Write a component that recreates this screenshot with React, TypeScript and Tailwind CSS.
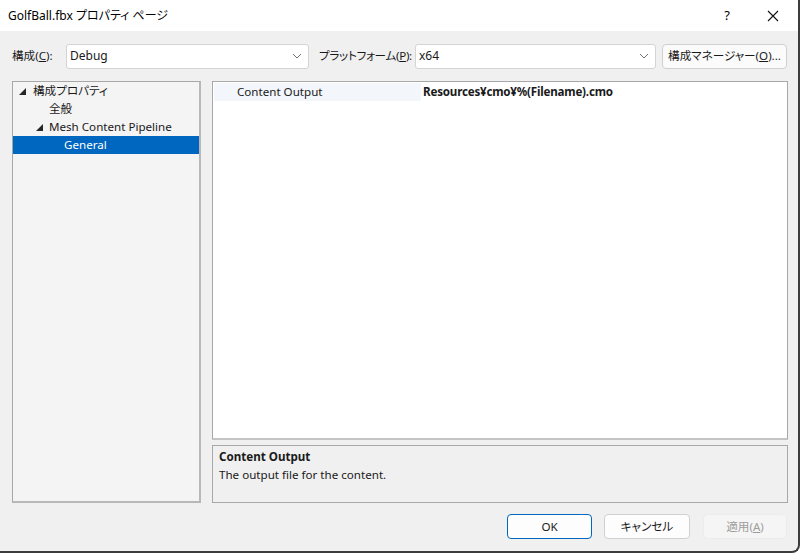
import React from "react";

const font = { fontFamily: '"Noto Sans", "Noto Sans CJK JP", sans-serif' };

function Chevron() {
  return (
    <svg width="10" height="6" viewBox="0 0 10 6" className="shrink-0">
      <path d="M1 1 L5 5 L9 1" fill="none" stroke="#707070" strokeWidth="1" />
    </svg>
  );
}

function Tri() {
  return (
    <svg width="7" height="7" viewBox="0 0 7 7" className="shrink-0">
      <path d="M7 0 L7 7 L0 7 Z" fill="#262626" />
    </svg>
  );
}

export default function App() {
  return (
    <div
      className="w-[800px] h-[553px] bg-[#f0f0f0] border-r-2 border-b-2 border-[#3c3c3c] rounded-br-[8px] overflow-hidden flex flex-col text-[11.6px] text-[#1a1a1a] [font-feature-settings:'palt']"
      style={font}
    >
      {/* Title bar */}
      <div className="h-[31px] bg-white flex items-center shrink-0">
        <div className="pl-[8px] flex-1 text-[12px] text-black whitespace-nowrap">GolfBall.fbx プロパティ ページ</div>
        <div className="w-[46px] flex justify-center text-[13px] text-black">?</div>
        <div className="w-[46px] flex justify-center mr-[2px]">
          <svg width="12" height="12" viewBox="0 0 12 12">
            <path d="M1 1 L11 11 M11 1 L1 11" stroke="#111" strokeWidth="1.1" />
          </svg>
        </div>
      </div>

      {/* Body */}
      <div className="flex-1 flex flex-col pl-[12px] pr-[10px] pt-[12px]">
        {/* Config row */}
        <div className="flex items-center h-[26px]">
          <div className="w-[54px] shrink-0 whitespace-nowrap">
            構成(<span className="underline">C</span>):
          </div>
          <div className="w-[243px] shrink-0 h-[25px] bg-white border border-[#d4d4d4] rounded-[3px] flex items-center pl-[3px] pr-[6px]">
            <span className="flex-1 text-[12px]">Debug</span>
            <Chevron />
          </div>
          <div className="ml-[10px] w-[96px] shrink-0 whitespace-nowrap tracking-[-0.3px]">
            プラットフォーム(<span className="underline">P</span>):
          </div>
          <div className="w-[241px] shrink-0 h-[25px] bg-white border border-[#d4d4d4] rounded-[3px] flex items-center pl-[3px] pr-[6px]">
            <span className="flex-1 text-[12px]">x64</span>
            <Chevron />
          </div>
          <div className="ml-[6px] w-[125px] shrink-0 h-[25px] bg-[#fbfbfb] border border-[#d0d0d0] rounded-[4px] flex items-center justify-center whitespace-nowrap">
            構成マネージャー(<span className="underline">O</span>)...
          </div>
        </div>

        {/* Main */}
        <div className="flex mt-[12px] h-[422px]">
          {/* Tree */}
          <div className="w-[189px] h-full bg-[#f4f4f4] border border-[#a8a8a8] border-r-2 border-b-2 border-r-[#b8b8b8] border-b-[#b8b8b8]">
            <div className="h-[18px] flex items-center pl-[6px]">
              <Tri />
              <span className="ml-[7px]">構成プロパティ</span>
            </div>
            <div className="h-[18px] flex items-center pl-[36px]">全般</div>
            <div className="h-[18px] flex items-center pl-[23px]">
              <Tri />
              <span className="ml-[6px]">Mesh Content Pipeline</span>
            </div>
            <div className="h-[18px] flex items-center pl-[51px] bg-[#0067c0] text-white">General</div>
          </div>

          {/* Right side */}
          <div className="ml-[11px] w-[576px] flex flex-col">
            <div className="h-[360px] bg-white border border-[#a8a8a8] border-b-2 border-b-[#c4c4c4] p-[1px]">
              <div className="h-[18px] flex items-center">
                <div className="w-[207px] h-full bg-[#f3f6fa] flex items-center pl-[23px]">Content Output</div>
                <div className="pl-[2px] font-bold tracking-[-0.2px]">Resources¥cmo¥%(Filename).cmo</div>
              </div>
            </div>
            <div className="mt-[5px] h-[58px] bg-[#f0f0f0] border border-[#a8a8a8] px-[6px] pt-[2px]">
              <div className="font-bold h-[18px] flex items-center">Content Output</div>
              <div className="h-[18px] flex items-center">The output file for the content.</div>
            </div>
          </div>
        </div>

        {/* Buttons */}
        <div className="flex justify-end mt-[11px] pr-[1px]">
          <div className="w-[85px] h-[25px] bg-[#fdfdfd] border border-[#0067c0] rounded-[4px] flex items-center justify-center">OK</div>
          <div className="ml-[12px] w-[86px] h-[25px] bg-[#fdfdfd] border border-[#d0d0d0] rounded-[4px] flex items-center justify-center">キャンセル</div>
          <div className="ml-[13px] w-[84px] h-[25px] bg-[#f5f5f5] border border-[#ececec] rounded-[4px] flex items-center justify-center text-[#9d9d9d]">
            適用(<span className="underline">A</span>)
          </div>
        </div>
      </div>
    </div>
  );
}
